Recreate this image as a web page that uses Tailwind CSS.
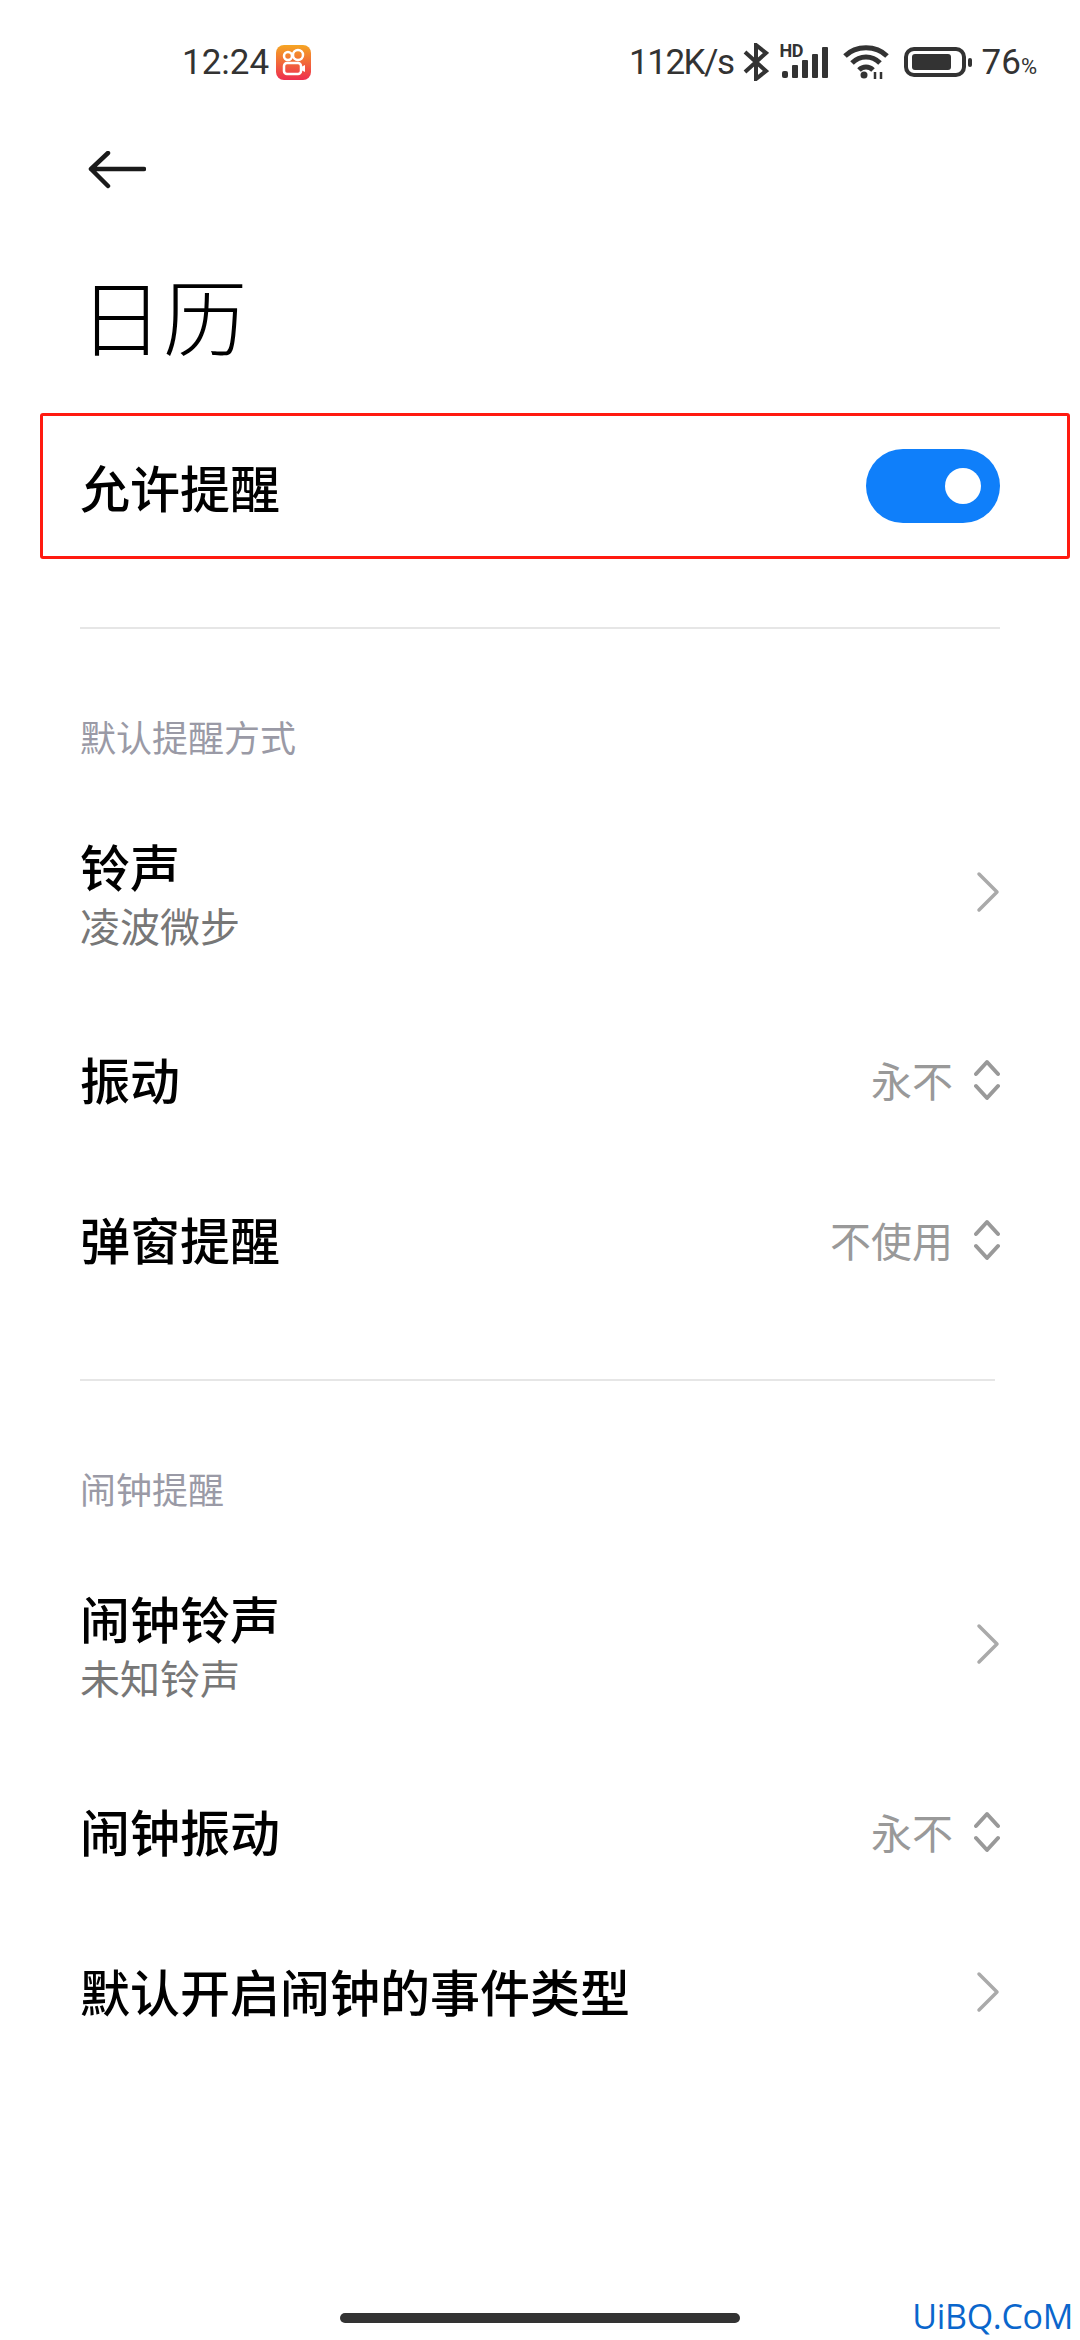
<!DOCTYPE html>
<html lang="zh-CN">

<head>
  <meta charset="UTF-8">
  <meta name="viewport" content="width=device-width, initial-scale=1.0">
  <title>日历</title>
  <script src="https://cdn.jsdelivr.net/npm/@tailwindcss/browser@4"></script>
</head>

<body class="bg-white">
  <div class="relative w-[1080px] h-[2340px] overflow-hidden bg-white font-['Noto_Sans_CJK_SC','Noto_Sans',sans-serif]">

    <!-- Status bar -->
    <div class="flex items-center h-[124px] pl-[182px] pr-[43px] text-[#333] font-['Roboto',sans-serif]">
      <span class="text-[35px] leading-none w-[94px]">12:24</span>
      <svg class="w-[35px] h-[35px]" viewBox="0 0 35 35">
        <defs>
          <linearGradient id="ks" x1="0" y1="0" x2="0" y2="1">
            <stop offset="0" stop-color="#f5a623" />
            <stop offset="1" stop-color="#ee2d50" />
          </linearGradient>
        </defs>
        <rect width="35" height="35" rx="8" fill="url(#ks)" />
        <circle cx="12" cy="11" r="4" fill="none" stroke="#fff" stroke-width="2.5" />
        <circle cx="22" cy="10" r="5" fill="none" stroke="#fff" stroke-width="2.5" />
        <rect x="8" y="18" width="17" height="11" rx="3" fill="none" stroke="#fff" stroke-width="2.5" />
        <path d="M25 22l4-2v7l-4-2z" fill="#fff" />
      </svg>
      <span class="ml-auto text-[35px] leading-none tracking-[-1.5px]">112K/s</span>
      <svg class="ml-[9px] w-[26px] h-[38px]" viewBox="0 0 26 38" fill="none" stroke="#333" stroke-width="4">
        <path d="M2 9l21 19-10 8V2l10 8L2 29" />
      </svg>
      <div class="relative ml-[11px] w-[50px] h-[34px]">
        <span class="absolute left-0 top-[-3px] text-[18px] leading-none font-bold tracking-[-0.5px]">HD</span>
        <svg class="absolute inset-0" width="50" height="34" viewBox="0 0 50 34" fill="#333">
          <rect x="2" y="26" width="6" height="7" rx="2" />
          <rect x="12" y="20" width="6" height="13" rx="1" />
          <rect x="22" y="15" width="6" height="18" rx="1" />
          <rect x="32" y="9" width="6" height="24" rx="1" />
          <rect x="42" y="2" width="6" height="31" rx="1" />
        </svg>
      </div>
      <svg class="ml-[13px] w-[46px] h-[34px]" viewBox="0 0 46 34" fill="none" stroke="#333" stroke-width="5">
        <path d="M2 11C13 0 33 0 44 11" />
        <path d="M9 18C17 10 29 10 37 18" />
        <path d="M16 25C20 21 26 21 30 25" />
        <circle cx="21" cy="30" r="3.5" fill="#333" stroke="none" />
        <path d="M32 34v-7M38 34v-7" stroke-width="2.5" />
      </svg>
      <svg class="ml-[15px] w-[68px] h-[30px]" viewBox="0 0 68 30">
        <rect x="2" y="2" width="58" height="26" rx="8" fill="none" stroke="#333" stroke-width="4" />
        <rect x="8" y="7" width="39" height="16" rx="3" fill="#333" />
        <rect x="64" y="11" width="4" height="9" rx="2" fill="#333" />
      </svg>
      <span class="ml-[10px] text-[35px] leading-none">76<span class="text-[22px]">%</span></span>
    </div>

    <!-- Back arrow -->
    <div class="h-[92px] pl-[88px] flex items-center">
      <svg class="w-[58px] h-[38px]" viewBox="0 0 58 38" fill="none" stroke="#1a1a1a" stroke-width="4.5" stroke-linecap="round" stroke-linejoin="round">
        <path d="M56 18H3M20 2L3 18l17 17" />
      </svg>
    </div>

    <!-- Title -->
    <h1 class="mt-[48px] h-[100px] pl-[79px] text-[84px] leading-[100px] font-light text-black">日历</h1>

    <!-- Allow reminders, boxed in red -->
    <div class="mt-[49px] ml-[40px] w-[1030px] h-[146px] border-[3px] border-[#ff1a10] rounded-[3px] flex items-center justify-between pl-[37px] pr-[67px]">
      <span class="text-[50px] font-medium text-black">允许提醒</span>
      <div class="w-[134px] h-[74px] rounded-full bg-[#0f7ffa] flex items-center justify-end pr-[19px]">
        <div class="w-[36px] h-[36px] rounded-full bg-white"></div>
      </div>
    </div>

    <!-- Default reminder section -->
    <div class="mt-[68px] mx-[80px] h-[2px] bg-[#e6e6e6]"></div>
    <div class="mt-[82px] h-[50px] pl-[80px] text-[36px] leading-[50px] text-[#9a9aa6]">默认提醒方式</div>

    <div class="mt-[51px] h-[160px] px-[80px] flex items-center justify-between">
      <div class="pt-[5px]">
        <div class="text-[50px] leading-[60px] font-medium text-black">铃声</div>
        <div class="text-[40px] leading-[60px] text-[#777]">凌波微步</div>
      </div>
      <svg class="w-[24px] h-[42px]" viewBox="0 0 24 42" fill="none" stroke="#aaa" stroke-width="3.5" stroke-linecap="round" stroke-linejoin="round">
        <path d="M3 3l18 18L3 39" />
      </svg>
    </div>

    <div class="mt-[28px] h-[160px] px-[80px] flex items-center justify-between">
      <span class="text-[50px] font-medium text-black pb-[3px]">振动</span>
      <div class="flex items-center gap-[21px]">
        <span class="text-[41px] text-[#999]">永不</span>
        <svg class="w-[26px] h-[42px]" viewBox="0 0 26 42" fill="none" stroke="#999" stroke-width="4" stroke-linecap="round" stroke-linejoin="round">
          <path d="M2 15L13 3l11 12M2 27l11 12 11-12" />
        </svg>
      </div>
    </div>

    <div class="h-[160px] px-[80px] flex items-center justify-between">
      <span class="text-[50px] font-medium text-black pb-[3px]">弹窗提醒</span>
      <div class="flex items-center gap-[21px]">
        <span class="text-[41px] text-[#999]">不使用</span>
        <svg class="w-[26px] h-[42px]" viewBox="0 0 26 42" fill="none" stroke="#999" stroke-width="4" stroke-linecap="round" stroke-linejoin="round">
          <path d="M2 15L13 3l11 12M2 27l11 12 11-12" />
        </svg>
      </div>
    </div>

    <!-- Alarm section -->
    <div class="mt-[59px] ml-[80px] w-[915px] h-[2px] bg-[#e6e6e6]"></div>
    <div class="mt-[82px] h-[50px] pl-[80px] text-[36px] leading-[50px] text-[#9a9aa6]">闹钟提醒</div>

    <div class="mt-[51px] h-[160px] px-[80px] flex items-center justify-between">
      <div class="pt-[5px]">
        <div class="text-[50px] leading-[60px] font-medium text-black">闹钟铃声</div>
        <div class="text-[40px] leading-[60px] text-[#777]">未知铃声</div>
      </div>
      <svg class="w-[24px] h-[42px]" viewBox="0 0 24 42" fill="none" stroke="#aaa" stroke-width="3.5" stroke-linecap="round" stroke-linejoin="round">
        <path d="M3 3l18 18L3 39" />
      </svg>
    </div>

    <div class="mt-[28px] h-[160px] px-[80px] flex items-center justify-between">
      <span class="text-[50px] font-medium text-black pb-[3px]">闹钟振动</span>
      <div class="flex items-center gap-[21px]">
        <span class="text-[41px] text-[#999]">永不</span>
        <svg class="w-[26px] h-[42px]" viewBox="0 0 26 42" fill="none" stroke="#999" stroke-width="4" stroke-linecap="round" stroke-linejoin="round">
          <path d="M2 15L13 3l11 12M2 27l11 12 11-12" />
        </svg>
      </div>
    </div>

    <div class="h-[160px] px-[80px] flex items-center justify-between">
      <span class="text-[50px] font-medium text-black pb-[3px]">默认开启闹钟的事件类型</span>
      <svg class="w-[24px] h-[42px]" viewBox="0 0 24 42" fill="none" stroke="#aaa" stroke-width="3.5" stroke-linecap="round" stroke-linejoin="round">
        <path d="M3 3l18 18L3 39" />
      </svg>
    </div>

    <!-- Home indicator and watermark -->
    <div class="absolute left-[340px] top-[2313px] w-[400px] h-[10px] rounded-full bg-[#333]"></div>
    <div class="absolute right-[7px] top-[2292px] text-[34px] leading-[48px] tracking-[-0.3px] text-[#0a66cc] font-['Open_Sans',sans-serif]">UiBQ.CoM</div>
  </div>
</body>

</html>
